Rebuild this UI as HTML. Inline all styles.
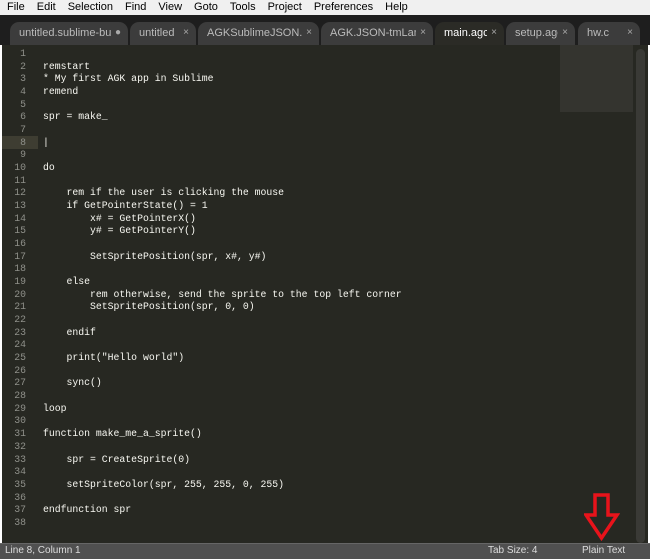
<!DOCTYPE html><html><head><style>
body{margin:0;width:650px;height:560px;overflow:hidden;background:#fff;font-family:"Liberation Sans",sans-serif;position:relative}
.menu{position:absolute;top:0;left:0;width:650px;height:15px;background:#f0f0f0;font-size:11px;line-height:15px}
.menu span{margin-left:7px;margin-right:5px}
.tabbar{position:absolute;top:15px;left:0;width:650px;height:30px;background:#1e1e1e}
.tab{position:absolute;top:7px;height:23px;background:#3c3c3c;border-radius:9px 9px 0 0;color:#bbb;font-size:11px;line-height:22px;padding-left:9px;padding-right:17px;box-sizing:border-box;white-space:nowrap;overflow:hidden}
.tab i{font-style:normal;display:block;overflow:hidden}
.tab b{position:absolute;right:7px;top:0;font-weight:normal;color:#aaa;font-size:10px}
.tab.act{background:#2b2b26;color:#fff}
.ed{position:absolute;top:45px;left:2px;width:646px;height:498px;background:#272822}
.code{position:absolute;left:0;top:3px;font-family:"Liberation Mono",monospace;font-size:9.8px;line-height:12.67px;color:#f8f8f2;white-space:pre}
.ln{position:absolute;left:0;width:24px;text-align:right;color:#8f908a}
.tx{position:absolute;left:41px}
.hl{position:absolute;left:0;top:91px;width:36px;height:13px;background:#3e3d32}
.mm{position:absolute;left:558px;top:0;width:73px;height:67px;background:#34342f}
.sb{position:absolute;left:634px;top:4px;width:9px;height:494px;background:#3a3a36;border-radius:5px}
.status{position:absolute;top:543px;left:0;width:650px;height:15px;background:#505050;border-top:1px solid #666;color:#ddd;font-size:10px;line-height:14px}
</style></head><body>
<div class="menu"><span>File</span><span>Edit</span><span>Selection</span><span>Find</span><span>View</span><span>Goto</span><span>Tools</span><span>Project</span><span>Preferences</span><span>Help</span></div>
<div class="tabbar">
<div class="tab" style="left:10px;width:118px"><i>untitled.sublime-bu</i><b>●</b></div>
<div class="tab" style="left:130px;width:66px"><i>untitled</i><b>×</b></div>
<div class="tab" style="left:198px;width:121px"><i>AGKSublimeJSON.JS</i><b>×</b></div>
<div class="tab" style="left:321px;width:112px"><i>AGK.JSON-tmLangu</i><b>×</b></div>
<div class="tab act" style="left:435px;width:69px"><i>main.agc</i><b>×</b></div>
<div class="tab" style="left:506px;width:69px"><i>setup.agc</i><b>×</b></div>
<div class="tab" style="left:578px;width:62px"><i>hw.c</i><b>×</b></div>
</div>
<div class="ed">
<div class="hl"></div>
<div class="mm"></div>
<div class="sb"></div>
<div class="code" style="width:40px"><div class="ln">1
2
3
4
5
6
7
8
9
10
11
12
13
14
15
16
17
18
19
20
21
22
23
24
25
26
27
28
29
30
31
32
33
34
35
36
37
38</div></div>
<div class="code"><div class="tx">
remstart
* My first AGK app in Sublime
remend

spr = make_

|

do

    rem if the user is clicking the mouse
    if GetPointerState() = 1
        x# = GetPointerX()
        y# = GetPointerY()

        SetSpritePosition(spr, x#, y#)

    else
        rem otherwise, send the sprite to the top left corner
        SetSpritePosition(spr, 0, 0)

    endif

    print("Hello world")

    sync()

loop

function make_me_a_sprite()

    spr = CreateSprite(0)

    setSpriteColor(spr, 255, 255, 0, 255)

endfunction spr
</div></div>
</div>
<svg style="position:absolute;left:584px;top:493px" width="36" height="48"><path d="M11 2H24V22H33L17.5 45L2 22H11Z" fill="none" stroke="#e8131b" stroke-width="3.5" stroke-linejoin="miter"/></svg>
<div class="status"><span style="position:absolute;left:5px">Line 8, Column 1</span><span style="position:absolute;left:488px">Tab Size: 4</span><span style="position:absolute;left:582px">Plain Text</span></div>
</body></html>
